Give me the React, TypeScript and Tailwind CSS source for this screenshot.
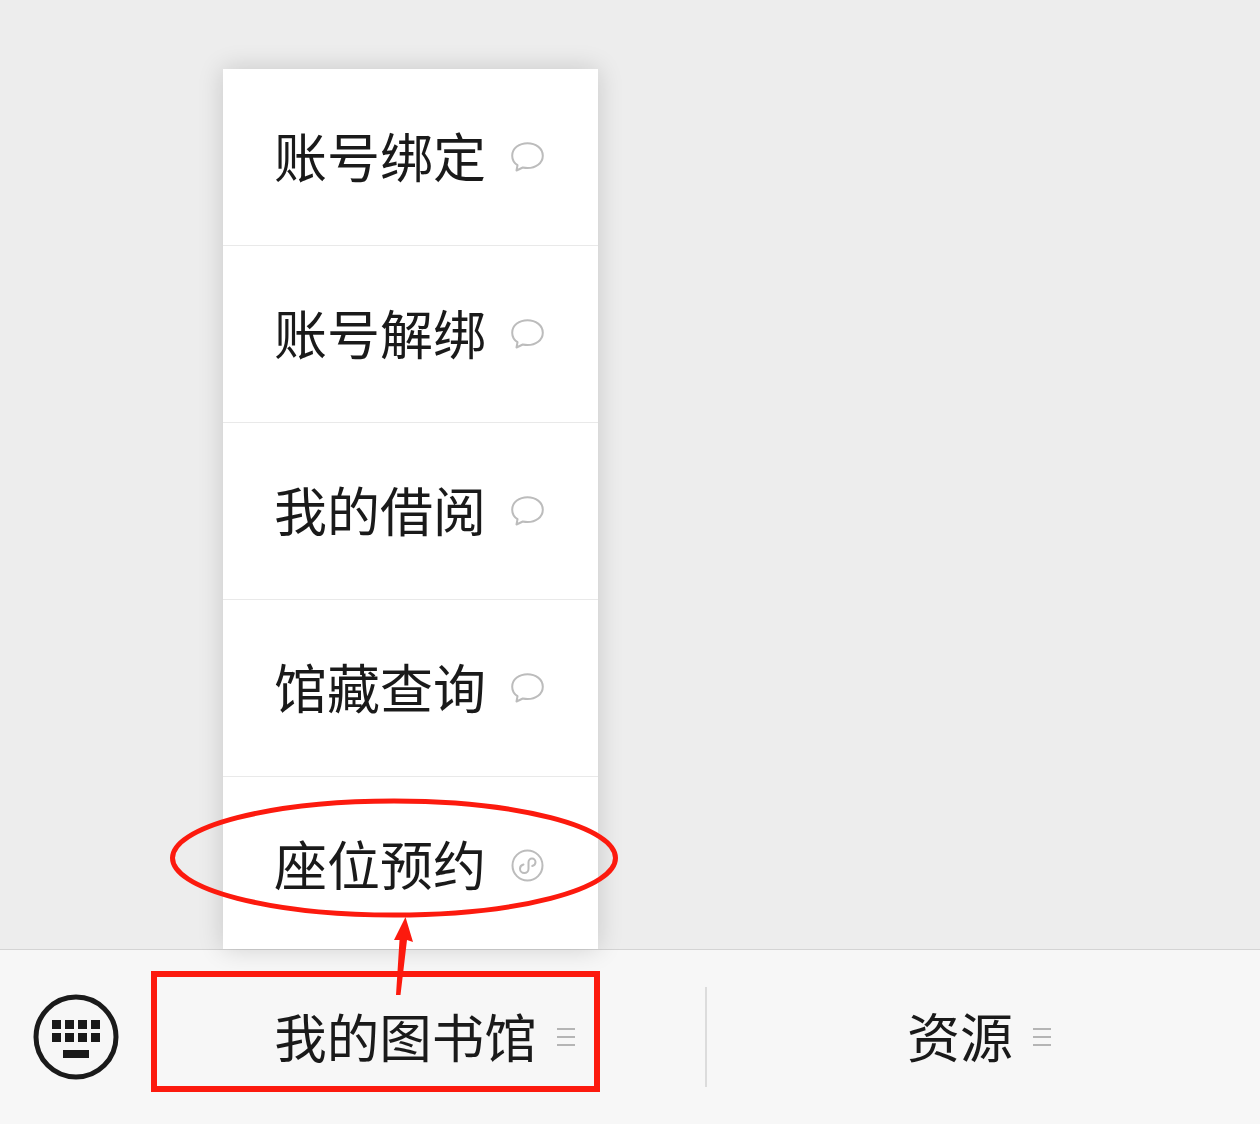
const menuItems = [
  { label: '账号绑定', icon: 'chat' },
  { label: '账号解绑', icon: 'chat' },
  { label: '我的借阅', icon: 'chat' },
  { label: '馆藏查询', icon: 'chat' },
  { label: '座位预约', icon: 'mini' },
];

function ChatIcon() {
  return (
    <svg width="33" height="30" viewBox="0 0 33 30" fill="none" className="shrink-0">
      <path
        d="M16.500 1.200C8.500 1.200 1.200 6 1.200 13.700c0 4 2 7.300 5.300 9.500l-1 5.300 6.300-3c1.500.3 3.100.5 4.700.5 8 0 15.300-4.700 15.300-12.300S24.500 1.200 16.500 1.200Z"
        stroke="#bcbcbc"
        strokeWidth="2"
        strokeLinejoin="round"
      />
    </svg>
  );
}

function MiniIcon() {
  return (
    <svg width="33" height="33" viewBox="0 0 33 33" fill="none" className="shrink-0">
      <circle cx="16.500" cy="16.500" r="15" stroke="#bcbcbc" strokeWidth="2" />
      <path
        d="M12.500 15.500c-2 .5-3.500 2.200-3.500 4.300 0 2.400 2 4.300 4.300 4.300 2.500 0 4.200-2 4.200-4.300v-6.500c0-2 1.500-3.700 3.500-3.700 2 0 3.500 1.600 3.500 3.500 0 1.900-1.300 3.400-3.300 3.900"
        stroke="#bcbcbc"
        strokeWidth="2"
        strokeLinecap="round"
      />
    </svg>
  );
}

function KeyboardIcon() {
  return (
    <svg width="86" height="86" viewBox="0 0 86 86" fill="none">
      <circle cx="43" cy="43" r="40" stroke="#1a1a1a" strokeWidth="5" />
      <g fill="#1a1a1a">
        <rect x="19" y="26" width="9" height="9" />
        <rect x="32" y="26" width="9" height="9" />
        <rect x="45" y="26" width="9" height="9" />
        <rect x="58" y="26" width="9" height="9" />
        <rect x="19" y="39" width="9" height="9" />
        <rect x="32" y="39" width="9" height="9" />
        <rect x="45" y="39" width="9" height="9" />
        <rect x="58" y="39" width="9" height="9" />
        <rect x="30" y="56" width="26" height="8" />
      </g>
    </svg>
  );
}

function MenuLines() {
  return (
    <div className="flex flex-col gap-[5.500px] w-[18px] shrink-0">
      <div className="h-[2.500px] bg-[#b5b5b5]" />
      <div className="h-[2.500px] bg-[#b5b5b5]" />
      <div className="h-[2.500px] bg-[#b5b5b5]" />
    </div>
  );
}

export default function App() {
  return (
    <div
      className="relative w-[1260px] h-[1124px] overflow-hidden bg-[#ededed] flex flex-col text-[#1a1a1a] text-[53px] leading-none"
      style={{ fontFamily: '"Noto Sans CJK SC", "Noto Sans", sans-serif' }}
    >
      <div className="h-[949px] shrink-0 pt-[69px] pl-[223px]">
        <div className="relative z-10 w-[375px] h-[880px] bg-white flex flex-col overflow-hidden shadow-[0_0_24px_rgba(0,0,0,0.16)]">
          {menuItems.map((item, i) => (
            <div
              key={item.label}
              className={`h-[177px] shrink-0 flex items-center pl-[51px] gap-[25px] ${
                i < menuItems.length - 1 ? 'border-b border-[#e9e9e9]' : ''
              }`}
            >
              <span className="pb-[4px]">{item.label}</span>
              {item.icon === 'chat' ? <ChatIcon /> : <MiniIcon />}
            </div>
          ))}
        </div>
      </div>

      <div className="h-[175px] flex items-center bg-[#f7f7f7] border-t border-[#d4d4d4]">
        <div className="w-[152px] shrink-0 flex justify-center">
          <KeyboardIcon />
        </div>
        <div className="flex-1 flex items-center justify-center gap-[20px] pr-[8px]">
          <span className="pb-[4px] text-[52.500px]">我的图书馆</span>
          <MenuLines />
        </div>
        <div className="w-[2px] h-[100px] bg-[#dcdcdc]" />
        <div className="w-[553px] flex items-center justify-center gap-[20px] pr-[9px]">
          <span className="pb-[4px]">资源</span>
          <MenuLines />
        </div>
      </div>

      <svg className="absolute inset-0 z-30" width="1260" height="1124" viewBox="0 0 1260 1124" fill="none">
        <ellipse cx="394" cy="858" rx="221.500" ry="57" stroke="#fc1a0e" strokeWidth="5" />
        <rect x="154" y="974" width="443" height="115" stroke="#fc1a0e" strokeWidth="6" />
        <path
          d="M405.500 917 L413 942 L407 940 L400.500 995 L396 995 L399.500 940 L394 940 Z"
          fill="#fc1a0e"
        />
      </svg>
    </div>
  );
}
